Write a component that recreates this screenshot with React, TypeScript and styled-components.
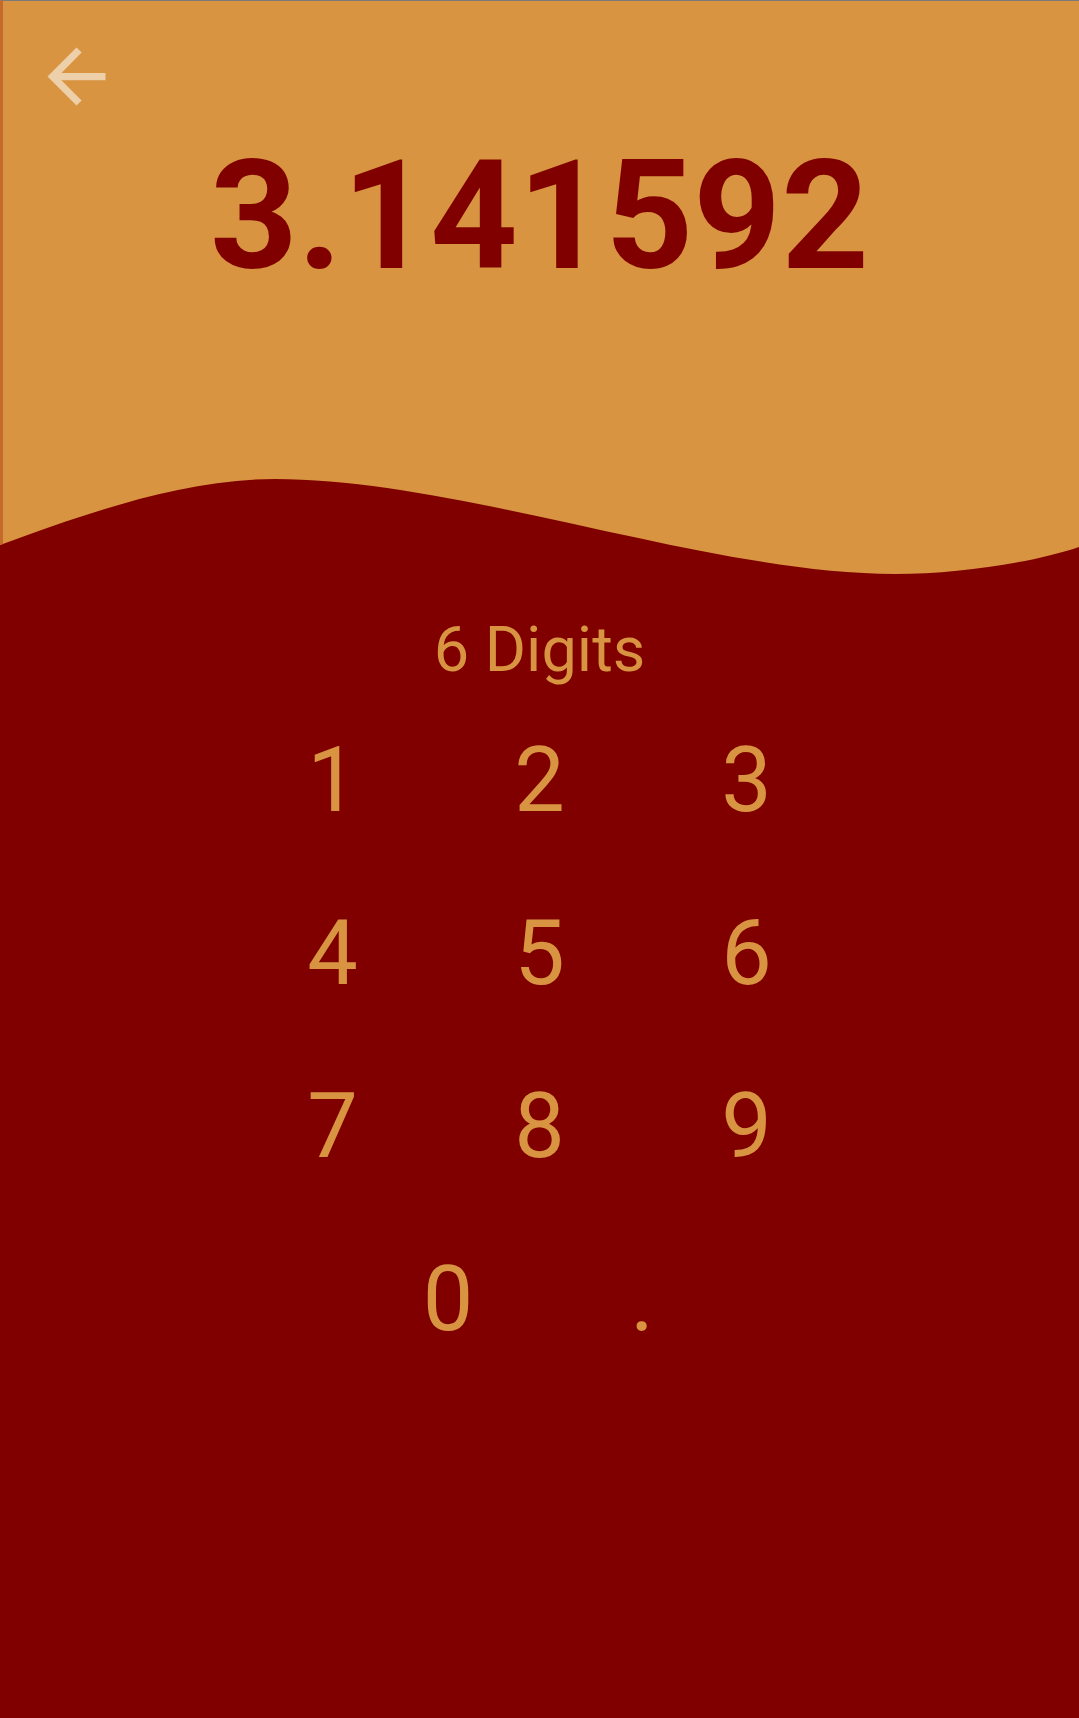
import React from "react";
import styled, { createGlobalStyle } from "styled-components";

const ORANGE = "#D89440";
const MAROON = "#800000";
const EDGE = "#C46A2B";

const GlobalStyle = createGlobalStyle`
  html, body {
    margin: 0;
    padding: 0;
    background: ${MAROON};
  }
  body {
    font-family: Roboto, "Noto Sans", "Liberation Sans", sans-serif;
  }
  * { box-sizing: border-box; }
`;

const Screen = styled.div`
  width: 1079px;
  min-height: 1718px;
  background: ${MAROON};
  display: flex;
  flex-direction: column;
  overflow: hidden;
`;

const Header = styled.header`
  height: 479px;
  background: ${ORANGE};
  border-top: 1px solid #7a7a7a;
  border-left: 3px solid ${EDGE};
  padding: 32px 0 0 30px;
  display: flex;
  flex-direction: column;
`;

const BackButton = styled.button`
  width: 87px;
  height: 87px;
  padding: 0;
  border: none;
  background: transparent;
  color: rgba(255, 255, 255, 0.55);
  cursor: pointer;
  display: block;
  svg {
    display: block;
    width: 87px;
    height: 87px;
  }
`;

const Value = styled.div`
  margin: 19px 0 0 -33px;
  text-align: center;
  font-size: 153px;
  line-height: 153px;
  font-weight: 700;
  color: ${MAROON};
`;

const WaveSvg = styled.svg`
  display: block;
  width: 1079px;
  height: 96px;
  background: ${MAROON};
`;

const Body = styled.main`
  display: flex;
  flex-direction: column;
  align-items: center;
  padding-top: 35px;
`;

const Label = styled.div`
  font-size: 63px;
  line-height: 80px;
  color: ${ORANGE};
  font-weight: 400;
`;

const Keypad = styled.div`
  margin-top: 4px;
  display: flex;
  flex-direction: column;
  align-items: center;
`;

const KeyRow = styled.div<{ $shift?: number }>`
  display: flex;
  justify-content: center;
  padding-left: ${(p) => p.$shift ?? 0}px;
`;

const Key = styled.button<{ $w: number }>`
  width: ${(p) => p.$w}px;
  height: 173px;
  padding: 0;
  border: none;
  background: transparent;
  font-family: Roboto, "Noto Sans", "Liberation Sans", sans-serif;
  font-size: 90px;
  line-height: 173px;
  font-weight: 400;
  color: ${ORANGE};
  text-align: center;
  cursor: pointer;
`;

const rows = [
  ["1", "2", "3"],
  ["4", "5", "6"],
  ["7", "8", "9"],
];

export default function App() {
  return (
    <>
      <GlobalStyle />
      <Screen>
        <Header>
          <BackButton aria-label="Back">
            <svg viewBox="0 0 24 24" fill="currentColor">
              <path d="M20 11H7.83l5.59-5.59L12 4l-8 8 8 8 1.41-1.41L7.83 13H20v-2z" />
            </svg>
          </BackButton>
          <Value>3.141592</Value>
        </Header>
        <WaveSvg viewBox="0 0 1079 96" preserveAspectRatio="none">
          <path
            fill={ORANGE}
            d="M0 0 H1079 V68 C1035 83 960 95 895 95 C710 95 460 0 275 0 C180 0 80 37 0 66 Z"
          />
          <path fill={EDGE} d="M0 0 H3 V64.9 L0 66 Z" />
        </WaveSvg>
        <Body>
          <Label>6 Digits</Label>
          <Keypad>
            {rows.map((r, i) => (
              <KeyRow key={i}>
                {r.map((k) => (
                  <Key key={k} $w={207}>
                    {k}
                  </Key>
                ))}
              </KeyRow>
            ))}
            <KeyRow $shift={11}>
              <Key $w={194}>0</Key>
              <Key $w={194}>.</Key>
            </KeyRow>
          </Keypad>
        </Body>
      </Screen>
    </>
  );
}
